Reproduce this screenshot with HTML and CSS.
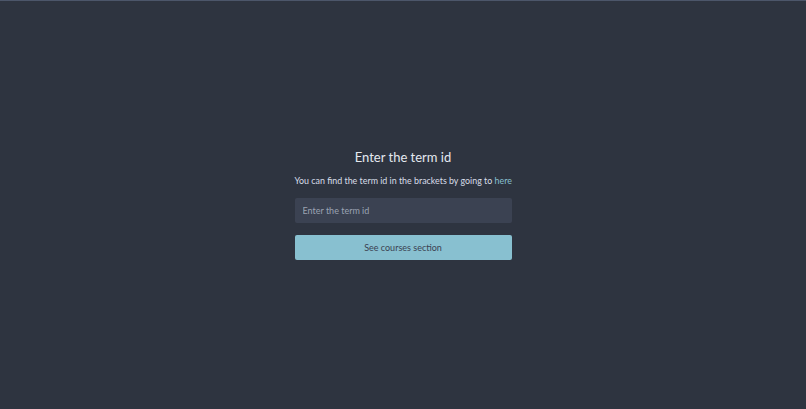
FILE: index.html
```html
<!DOCTYPE html>
<html lang="en">
<head>
<meta charset="utf-8">
<title>Enter the term id</title>
<link rel="stylesheet" href="styles.css">
</head>
<body>
<div class="topline"></div>
<main class="page">
  <section class="panel">
    <h1 class="title">Enter the term id</h1>
    <p class="hint">You can find the term id in the brackets by going to <a class="link" href="#">here</a></p>
    <input class="field" type="text" placeholder="Enter the term id">
    <button class="btn" type="button">See courses section</button>
  </section>
</main>
</body>
</html>
```
FILE: styles.css
```css
html, body {
  margin: 0;
  padding: 0;
  height: 100%;
}
body {
  background: #2e3440;
  font-family: "Lato", "Noto Sans", sans-serif;
  color: #e5e9f0;
  display: flex;
  flex-direction: column;
}
.topline {
  height: 1px;
  background: #4c566a;
  flex: none;
}
.page {
  flex: 1;
  display: flex;
  align-items: center;
  justify-content: center;
}
.panel {
  width: 217px;
  display: flex;
  flex-direction: column;
  align-items: stretch;
  margin-bottom: 5px;
}
.title {
  margin: 0;
  font-size: 13px;
  font-weight: 400;
  text-align: center;
  line-height: 22px;
  color: #e5e9f0;
}
.hint {
  margin: 7px 0 0;
  font-size: 8.9px;
  line-height: 12px;
  text-align: center;
  color: #d8dee9;
  white-space: nowrap;
}
.link {
  color: #88c0d0;
  text-decoration: none;
}
.field {
  margin-top: 11px;
  height: 25px;
  box-sizing: border-box;
  border: none;
  border-radius: 2px;
  background: #3b4252;
  padding: 0 8px;
  font-family: inherit;
  font-size: 9px;
  color: #d8dee9;
  outline: none;
}
.field::placeholder {
  color: #9aa3b3;
}
.btn {
  margin-top: 12px;
  height: 25px;
  border: none;
  border-radius: 2px;
  background: #88c0d0;
  color: #3b4252;
  font-family: inherit;
  font-size: 9px;
}
```
